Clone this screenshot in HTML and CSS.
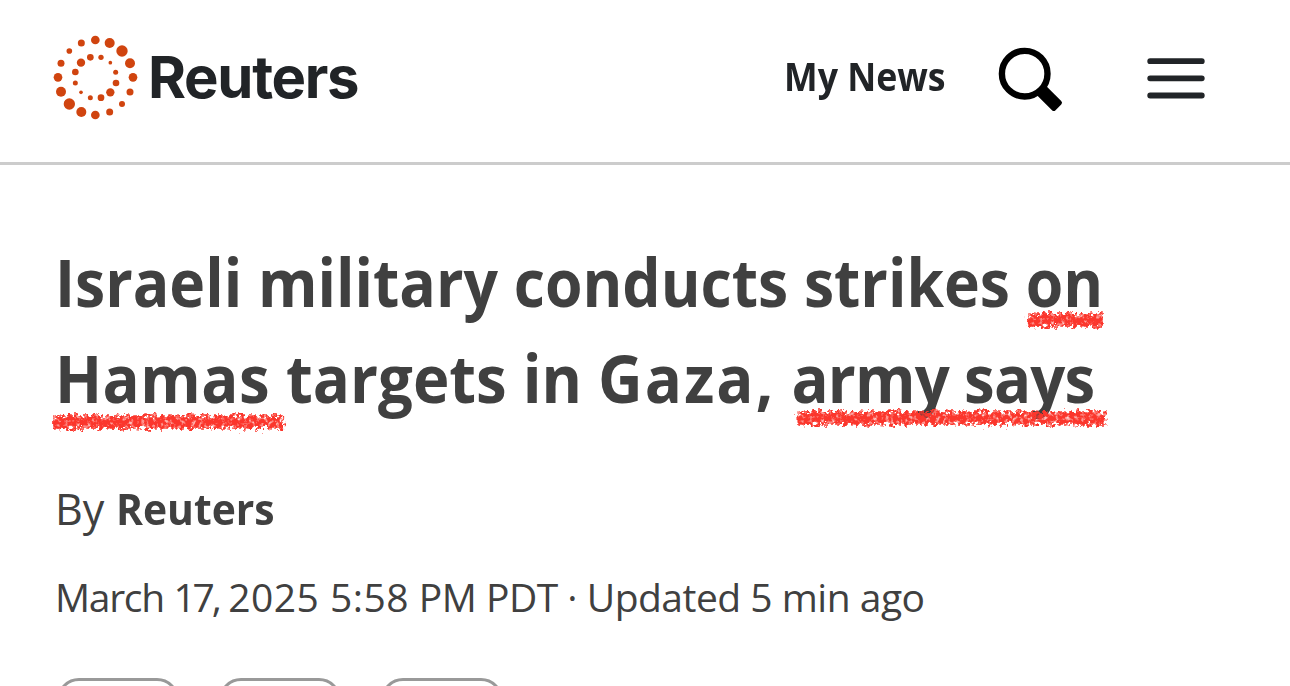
FILE: index.html
```html
<!DOCTYPE html>
<html lang="en">
<head>
    <meta charset="UTF-8">
    <meta name="viewport" content="width=device-width, initial-scale=1.0">
    <title>Reuters</title>
    <link rel="stylesheet" href="styles.css">
</head>
<body>
    <header>
        <a class="logo">
            <svg class="logo-mark" viewBox="39 30 258 258" fill="#d0440f">
                <!-- outer ring -->
                <circle cx="166" cy="45" r="13"/>
                <circle cx="209" cy="54" r="15"/>
                <circle cx="246" cy="78" r="17"/>
                <circle cx="270" cy="115" r="15"/>
                <circle cx="279" cy="157" r="13"/>
                <circle cx="270" cy="201" r="10.5"/>
                <circle cx="246" cy="237" r="9"/>
                <circle cx="209" cy="261" r="10.5"/>
                <circle cx="166" cy="270" r="13"/>
                <circle cx="124" cy="261" r="15"/>
                <circle cx="88" cy="237" r="17"/>
                <circle cx="63" cy="200" r="15"/>
                <circle cx="54" cy="157" r="13"/>
                <circle cx="63" cy="115" r="10.5"/>
                <circle cx="88" cy="78" r="8.5"/>
                <circle cx="124" cy="54" r="10.5"/>
                <!-- inner ring -->
                <circle cx="183" cy="97" r="8"/>
                <circle cx="211" cy="113" r="5.5"/>
                <circle cx="227" cy="142" r="7.5"/>
                <circle cx="228" cy="174" r="10"/>
                <circle cx="211" cy="202" r="12.5"/>
                <circle cx="183" cy="218" r="10"/>
                <circle cx="151" cy="218" r="7.5"/>
                <circle cx="123" cy="202" r="5.5"/>
                <circle cx="106" cy="174" r="7.5"/>
                <circle cx="106" cy="141" r="10"/>
                <circle cx="123" cy="113" r="12.5"/>
                <circle cx="151" cy="97" r="10"/>
            </svg>
            <span class="logo-text">Reuters</span>
        </a>
        <nav>
            <a class="my-news">My News</a>
            <svg class="search-icon" viewBox="0 0 66 66">
                <circle cx="26.7" cy="26.7" r="22.8" fill="none" stroke="#000" stroke-width="6.4"/>
                <rect x="28" y="-6.5" width="27" height="13" rx="2.5" transform="translate(21.5 21.5) rotate(45)"/>
            </svg>
            <svg class="menu-icon" viewBox="0 0 58 42" stroke="#212427" stroke-width="5.8" stroke-linecap="round">
                <path d="M3.2 4.2H54.8M3.2 21.3H54.8M3.2 38.5H54.8"/>
            </svg>
        </nav>
    </header>

    <main>
        <h1>
            <span class="line line-1">Israeli military conducts strikes <span class="marked">on<svg class="mark mark-on" width="100" height="36"><path d="M8 18H91"/></svg></span></span>
            <span class="line line-2"><span class="marked hamas">Hamas<svg class="mark mark-hamas" width="270" height="36"><path d="M8 18H258"/></svg></span> targets in <span class="gaza">Gaza,</span> <span class="marked army">army says<svg class="mark mark-army" width="370" height="36"><path d="M8 18H343"/></svg></span></span>
        </h1>
        <p class="byline">By <b>Reuters</b></p>
        <p class="date"><span class="month">March</span> <span class="day">17,</span> <span class="time">2025 5:58</span> PM PDT · Updated 5 min ago</p>
        <div class="actions">
            <button></button>
            <button></button>
            <button></button>
        </div>
    </main>

    <!-- rough crayon edge and grain for the marks -->
    <svg class="defs" width="0" height="0">
        <filter id="crayon" filterUnits="userSpaceOnUse" x="0" y="0" width="370" height="36" color-interpolation-filters="sRGB">
            <feTurbulence type="fractalNoise" baseFrequency="0.24" numOctaves="3" seed="4" result="noise"/>
            <feDisplacementMap in="SourceGraphic" in2="noise" scale="13" xChannelSelector="R" yChannelSelector="G" result="rough"/>
            <feColorMatrix in="noise" type="matrix" values="0 0 0 0 0  0 0 0 0 0  0 0 0 0 0  0 0 2.2 0 -0.1" result="grain"/>
            <feComposite in="rough" in2="grain" operator="in" result="chalk"/>
            <feGaussianBlur in="chalk" stdDeviation="0.5"/>
        </filter>
    </svg>
</body>
</html>
```
FILE: styles.css
```css
* {
    box-sizing: border-box;
}

body {
    font-family: "Open Sans", "Noto Sans", sans-serif;
    margin: 0;
    height: 686px;
    overflow: hidden;
    background-color: #fff;
    color: #404040;
}

header {
    display: flex;
    justify-content: space-between;
    height: 165px;
    padding: 35px 85px 0 53px;
    border-bottom: 3px solid #ccc;
}

.logo {
    display: flex;
    height: 86px;
}

.logo-mark {
    width: 86px;
    height: 86px;
}

.logo-text {
    margin-left: 9px;
    font-family: Inter, sans-serif;
    font-size: 58px;
    font-weight: 700;
    line-height: 84px;
    letter-spacing: -1.3px;
    color: #212427;
}

nav {
    display: flex;
    align-items: center;
    height: 86px;
}

.my-news {
    margin-bottom: 6px;
    font-size: 39px;
    font-weight: 700;
    color: #212427;
    transform: scaleX(0.915);
    transform-origin: right;
}

.search-icon {
    width: 66px;
    height: 66px;
    margin: 4px 0 0 52px;
}

.menu-icon {
    width: 58px;
    height: 42px;
    margin-left: 83px;
}

main {
    height: 521px;
    padding: 68px 55px 0;
    overflow: hidden;
}

h1 {
    margin: 0;
    font-size: 67px;
    font-weight: 700;
    line-height: 96px;
    white-space: nowrap;
}

/* slightly condensed headline */
.line {
    display: block;
    transform-origin: left;
}

.line-1 {
    transform: scaleX(0.905);
}

.line-2 {
    transform: scaleX(0.92);
}

.marked {
    position: relative;
}

.hamas {
    letter-spacing: 0.5px;
}

.gaza {
    letter-spacing: 2.3px;
}

.army {
    letter-spacing: -0.9px;
}

.mark {
    position: absolute;
    overflow: visible;
}

.mark path {
    fill: none;
    stroke: #fb362c;
    stroke-width: 13.5;
    filter: url(#crayon);
}

.mark-on {
    left: -6px;
    top: 67px;
}

.mark-hamas {
    left: -10px;
    top: 73px;
}

.mark-army {
    left: -1px;
    top: 69px;
}

.byline {
    margin: 52px 0 0;
    font-size: 43px;
    line-height: 64px;
}

.byline b {
    display: inline-block;
    font-weight: 700;
    transform: scaleX(0.95);
    transform-origin: left;
}

.date {
    margin: 28px 0 0;
    font-size: 39px;
    line-height: 56px;
    letter-spacing: -0.5px;
    white-space: nowrap;
}

.month {
    letter-spacing: -1.3px;
}

.day {
    letter-spacing: -3.2px;
}

.time {
    letter-spacing: 0.5px;
}

.actions {
    display: flex;
    gap: 40px;
    margin: 53px 0 0 2px;
}

.actions button {
    width: 122px;
    height: 60px;
    border: 3px solid #999;
    border-radius: 22px;
    background-color: #fff;
}

.defs {
    position: absolute;
}
```
